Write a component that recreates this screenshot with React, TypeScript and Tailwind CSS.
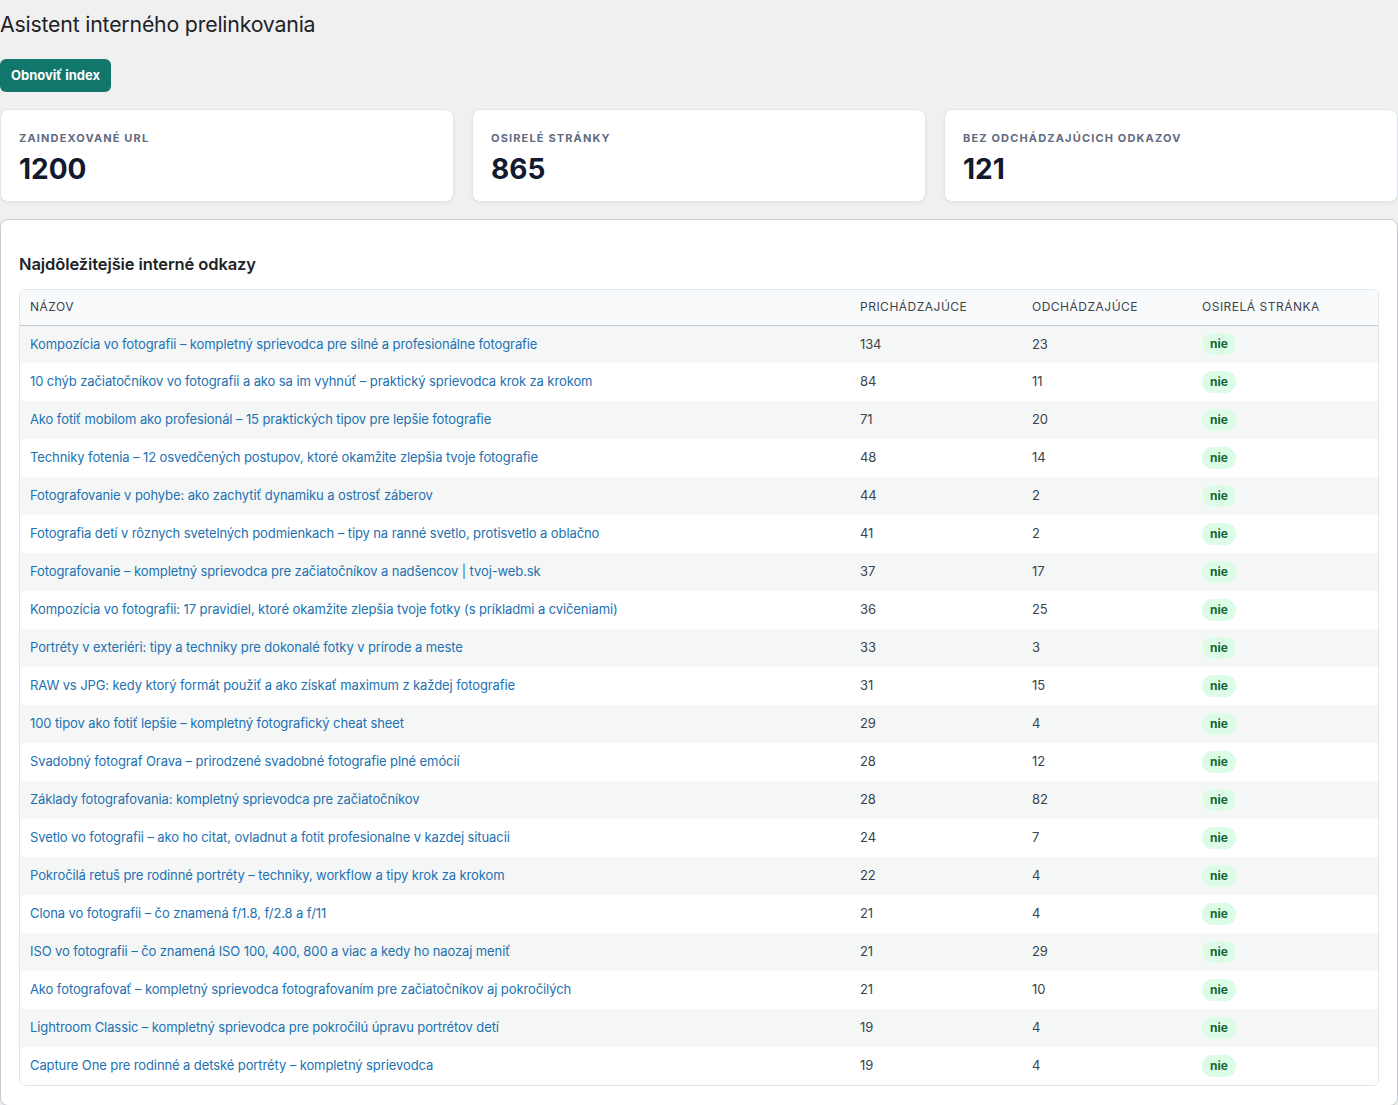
const stats = [
  { label: "Zaindexované URL", value: "1200" },
  { label: "Osirelé stránky", value: "865" },
  { label: "Bez odchádzajúcich odkazov", value: "121" },
];

const rows: [string, number, number][] = [
  ["Kompozícia vo fotografii – kompletný sprievodca pre silné a profesionálne fotografie", 134, 23],
  ["10 chýb začiatočníkov vo fotografii a ako sa im vyhnúť – praktický sprievodca krok za krokom", 84, 11],
  ["Ako fotiť mobilom ako profesionál – 15 praktických tipov pre lepšie fotografie", 71, 20],
  ["Techniky fotenia – 12 osvedčených postupov, ktoré okamžite zlepšia tvoje fotografie", 48, 14],
  ["Fotografovanie v pohybe: ako zachytiť dynamiku a ostrosť záberov", 44, 2],
  ["Fotografia detí v rôznych svetelných podmienkach – tipy na ranné svetlo, protisvetlo a oblačno", 41, 2],
  ["Fotografovanie – kompletný sprievodca pre začiatočníkov a nadšencov | tvoj-web.sk", 37, 17],
  ["Kompozícia vo fotografii: 17 pravidiel, ktoré okamžite zlepšia tvoje fotky (s príkladmi a cvičeniami)", 36, 25],
  ["Portréty v exteriéri: tipy a techniky pre dokonalé fotky v prírode a meste", 33, 3],
  ["RAW vs JPG: kedy ktorý formát použiť a ako získať maximum z každej fotografie", 31, 15],
  ["100 tipov ako fotiť lepšie – kompletný fotografický cheat sheet", 29, 4],
  ["Svadobný fotograf Orava – prirodzené svadobné fotografie plné emócií", 28, 12],
  ["Základy fotografovania: kompletný sprievodca pre začiatočníkov", 28, 82],
  ["Svetlo vo fotografii – ako ho citat, ovladnut a fotit profesionalne v kazdej situacii", 24, 7],
  ["Pokročilá retuš pre rodinné portréty – techniky, workflow a tipy krok za krokom", 22, 4],
  ["Clona vo fotografii – čo znamená f/1.8, f/2.8 a f/11", 21, 4],
  ["ISO vo fotografii – čo znamená ISO 100, 400, 800 a viac a kedy ho naozaj meniť", 21, 29],
  ["Ako fotografovať – kompletný sprievodca fotografovaním pre začiatočníkov aj pokročilých", 21, 10],
  ["Lightroom Classic – kompletný sprievodca pre pokročilú úpravu portrétov detí", 19, 4],
  ["Capture One pre rodinné a detské portréty – kompletný sprievodca", 19, 4],
];

export default function App() {
  return (
    <div className="min-h-[1105px] w-[1398px] bg-[#f0f0f1] font-['Inter',sans-serif] text-[#1d2327]">
      <h1 className="pt-[10px] text-[21.3px] leading-[28px] font-normal tracking-[-0.2px] text-[#1d2327]">
        Asistent interného prelinkovania
      </h1>

      <button className="mt-[21px] h-[33px] px-[11px] rounded-[6px] bg-[#11766b] text-white text-[13px] font-bold">
        Obnoviť index
      </button>

      <div className="mt-[17px] grid grid-cols-3 gap-[18px]">
        {stats.map((s) => (
          <div
            key={s.label}
            className="h-[93px] rounded-[8px] border border-[#dfe5ee] bg-white px-[18px] pt-[21px] shadow-[0_1px_3px_rgba(15,23,42,0.06)]"
          >
            <div className="text-[11px] leading-[14px] font-bold uppercase tracking-[1.15px] text-[#5f6b80]">
              {s.label}
            </div>
            <div className="mt-[6px] text-[28px] leading-[36px] font-bold text-[#111a2e]">
              {s.value}
            </div>
          </div>
        ))}
      </div>

      <div className="mt-[17px] rounded-[8px] border border-[#c6ccd6] bg-white px-[18px] pt-[33px] pb-[19px] shadow-[0_1px_3px_rgba(15,23,42,0.05)]">
        <h2 className="text-[16.5px] leading-[22px] font-semibold tracking-[-0.1px] text-[#1d2327]">
          Najdôležitejšie interné odkazy
        </h2>

        <div className="mt-[14px] overflow-hidden rounded-[6px] border border-[#dfe5ee]">
          <table className="w-full border-collapse text-[13px] tracking-[-0.1px]">
            <thead>
              <tr className="h-[35px] bg-[#f8fafc] border-b border-[#c3c8d0] text-left text-[12px] uppercase tracking-[0.5px] text-[#3c434a]">
                <th className="w-[830px] pl-[10px] font-normal">Názov</th>
                <th className="w-[172px] pl-[10px] font-normal">Prichádzajúce</th>
                <th className="w-[170px] pl-[10px] font-normal">Odchádzajúce</th>
                <th className="pl-[10px] font-normal">Osirelá stránka</th>
              </tr>
            </thead>
            <tbody>
              {rows.map(([title, inc, out], i) => (
                <tr key={i} className={i % 2 === 0 ? "h-[38px] bg-[#f5f7f7]" : "h-[38px] bg-white"}>
                  <td className="pl-[10px]">
                    <a href="#" className="text-[#2271b1]">
                      {title}
                    </a>
                  </td>
                  <td className="pl-[10px] text-[#3c434a]">{inc}</td>
                  <td className="pl-[10px] text-[#3c434a]">{out}</td>
                  <td className="pl-[10px]">
                    <span className="inline-block rounded-full bg-[#dcfce7] px-[8px] py-[3px] text-[12px] leading-[16px] font-bold tracking-normal text-[#166534]">
                      nie
                    </span>
                  </td>
                </tr>
              ))}
            </tbody>
          </table>
        </div>
      </div>
    </div>
  );
}
